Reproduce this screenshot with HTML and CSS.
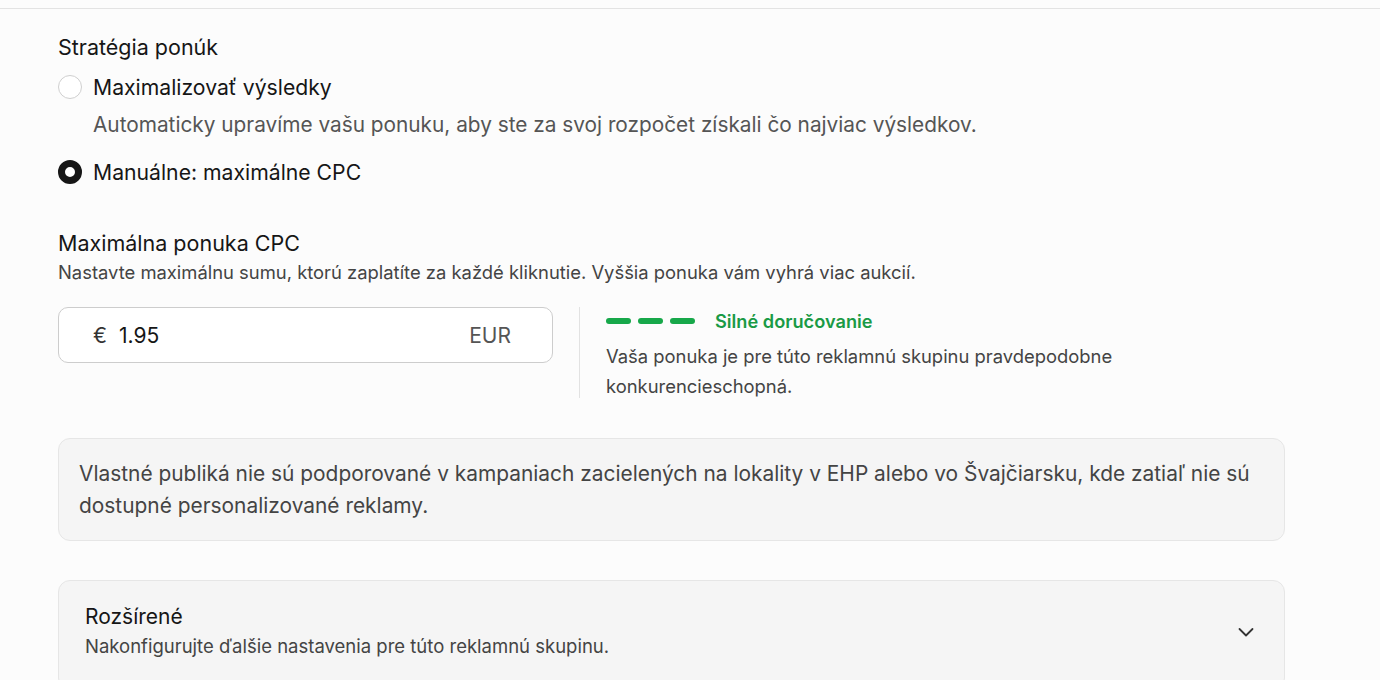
FILE: index.html
```html
<!DOCTYPE html>
<html lang="sk">
<head>
<meta charset="utf-8">
<title>Stratégia ponúk</title>
<link rel="stylesheet" href="styles.css">
</head>
<body>
<div class="topbar"></div>
<main class="content">
  <section class="strategy">
    <h2 class="section-title">Stratégia ponúk</h2>
    <label class="radio-row">
      <span class="radio"></span>
      <span class="radio-label">Maximalizovať výsledky</span>
    </label>
    <p class="radio-desc">Automaticky upravíme vašu ponuku, aby ste za svoj rozpočet získali čo najviac výsledkov.</p>
    <label class="radio-row radio-row-second">
      <span class="radio radio-checked"></span>
      <span class="radio-label">Manuálne: maximálne CPC</span>
    </label>
  </section>

  <section class="bid">
    <h3 class="bid-title">Maximálna ponuka CPC</h3>
    <p class="bid-sub">Nastavte maximálnu sumu, ktorú zaplatíte za každé kliknutie. Vyššia ponuka vám vyhrá viac aukcií.</p>
    <div class="bid-row">
      <div class="input">
        <span class="currency">€</span>
        <span class="value">1.95</span>
        <span class="unit">EUR</span>
      </div>
      <div class="strength">
        <div class="strength-head">
          <span class="dashes"><i></i><i></i><i></i></span>
          <span class="strength-label">Silné doručovanie</span>
        </div>
        <p class="strength-desc">Vaša ponuka je pre túto reklamnú skupinu pravdepodobne<br>konkurencieschopná.</p>
      </div>
    </div>
  </section>

  <div class="notice">Vlastné publiká nie sú podporované v kampaniach zacielených na lokality v EHP alebo vo Švajčiarsku, kde zatiaľ nie sú dostupné personalizované reklamy.</div>

  <div class="advanced">
    <div class="advanced-text">
      <div class="advanced-title">Rozšírené</div>
      <div class="advanced-sub">Nakonfigurujte ďalšie nastavenia pre túto reklamnú skupinu.</div>
    </div>
    <svg class="chevron" width="20" height="20" viewBox="0 0 20 20" fill="none"><path d="M3.5 7l6.5 6.5 6.5-6.5" stroke="#333" stroke-width="1.8" stroke-linecap="round" stroke-linejoin="round"/></svg>
  </div>
</main>
</body>
</html>
```

FILE: styles.css
```css
* { box-sizing: border-box; }
html, body { margin: 0; padding: 0; }
body {
  background: #fcfcfc;
  font-family: Inter, "Noto Sans", "Liberation Sans", sans-serif;
  color: #161616;
  height: 680px;
  overflow: hidden;
}
.topbar {
  height: 9px;
  border-bottom: 1px solid #e3e3e3;
}
.content {
  padding: 26px 0 0 58px;
  width: 1285px;
}
.section-title {
  margin: 0;
  font-size: 21.5px;
  font-weight: 400;
  line-height: 24px;
}
.radio-row {
  display: flex;
  align-items: center;
  gap: 11px;
  height: 32px;
  margin-top: 12px;
}
.radio-row-second { margin-top: 17px; }
.radio {
  width: 24px;
  height: 24px;
  border-radius: 50%;
  border: 1.5px solid #cfcfcf;
  background: #fff;
  flex: none;
}
.radio-checked {
  border: 7px solid #161616;
  background: #fff;
}
.radio-label {
  font-size: 21.2px;
  line-height: 32px;
}
.radio-desc {
  margin: 8px 0 0 35px;
  font-size: 20.8px;
  line-height: 28px;
  color: #555;
}
.bid { margin-top: 43px; }
.bid-title {
  margin: 0;
  font-size: 21.5px;
  font-weight: 400;
  line-height: 24px;
}
.bid-sub {
  margin: 6px 0 0;
  font-size: 18.4px;
  line-height: 22px;
  color: #444;
}
.bid-row {
  display: flex;
  margin-top: 24px;
}
.input {
  width: 495px;
  height: 56px;
  border: 1px solid #cdcdcd;
  border-radius: 10px;
  background: #fff;
  display: flex;
  align-items: center;
  padding: 0 41px 0 34px;
  font-size: 21px;
}
.currency { color: #333; margin-right: 12px; }
.value { color: #161616; flex: 1; }
.unit { color: #555; }
.strength {
  margin-left: 26px;
  border-left: 1px solid #e2e2e2;
  padding-left: 26px;
  height: 91px;
}
.strength-head {
  display: flex;
  align-items: center;
  height: 28px;
}
.dashes { display: flex; gap: 7px; }
.dashes i {
  display: block;
  width: 25px;
  height: 6px;
  border-radius: 3px;
  background: #17a84a;
}
.strength-label {
  margin-left: 20px;
  font-size: 18.2px;
  font-weight: 600;
  color: #1a9a45;
}
.strength-desc {
  margin: 6px 0 0;
  font-size: 18.4px;
  line-height: 30px;
  color: #444;
}
.notice {
  margin-top: 40px;
  background: #f5f5f5;
  border: 1px solid #e6e6e6;
  border-radius: 12px;
  padding: 19px 20px 18px;
  font-size: 20.9px;
  line-height: 32px;
  color: #444;
}
.advanced {
  margin-top: 39px;
  background: #f5f5f5;
  border: 1px solid #e6e6e6;
  border-radius: 12px;
  height: 110px;
  display: flex;
  align-items: flex-start;
  padding: 24px 28px 0 26px;
}
.advanced-text { flex: 1; }
.advanced-title {
  font-size: 21px;
  line-height: 24px;
  color: #161616;
}
.advanced-sub {
  margin-top: 6px;
  font-size: 18.5px;
  line-height: 22px;
  color: #444;
}
.chevron { margin-top: 17px; }
```
